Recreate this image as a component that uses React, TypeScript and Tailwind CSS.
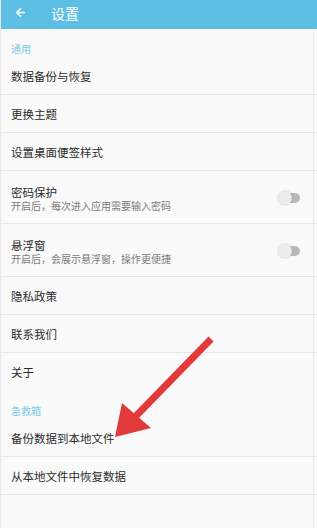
import React from "react";

const font = { fontFamily: '"Noto Sans CJK SC", "Noto Sans", sans-serif' };

function Toggle() {
  return (
    <div className="relative w-[22px] h-[16px] mr-[17px]">
      <div className="absolute right-0 top-[3px] w-[18px] h-[10px] rounded-full bg-[#b9b9b9]" />
      <div className="absolute left-0 top-[1px] w-[14px] h-[14px] rounded-full bg-[#ececec] shadow-[0_0_2px_rgba(0,0,0,0.25)]" />
    </div>
  );
}

function Item({ title }: { title: string }) {
  return (
    <div className="h-[38px] flex items-center pl-[10px] border-b border-[#e6e6e6] text-[11.5px] text-[#2b2b2b] leading-[14px]">
      {title}
    </div>
  );
}

function ToggleItem({ title, sub }: { title: string; sub: string }) {
  return (
    <div className="h-[53px] flex items-start justify-between pl-[10px] pt-[14px] border-b border-[#e6e6e6]">
      <div className="flex flex-col">
        <div className="text-[11.5px] leading-[14px] text-[#2b2b2b]">{title}</div>
        <div className="mt-[1px] text-[10px] leading-[12px] text-[#7a7a7a]">{sub}</div>
      </div>
      <div className="mt-[5px]">
        <Toggle />
      </div>
    </div>
  );
}

function Label({ text }: { text: string }) {
  return (
    <div className="h-[28px] pl-[10px] pt-[14px] text-[10px] leading-[12px] text-[#7cc8ea]">{text}</div>
  );
}

export default function App() {
  return (
    <div className="relative w-[317px] h-[528px] bg-[#fafafa] overflow-hidden border-l border-[#e8e8e8]" style={font}>
      <div className="h-[29px] bg-[#5ebfe5] flex items-center pb-[4px] pl-[13px] text-white">
        <svg width="13" height="13" viewBox="0 0 24 24" fill="none" stroke="white" strokeWidth="2.6" strokeLinecap="round" strokeLinejoin="round">
          <path d="M19 12H5" />
          <path d="M12 19l-7-7 7-7" />
        </svg>
        <span className="ml-[24px] text-[14px] leading-[16px]">设置</span>
      </div>
      <Label text="通用" />
      <Item title="数据备份与恢复" />
      <Item title="更换主题" />
      <Item title="设置桌面便签样式" />
      <ToggleItem title="密码保护" sub="开启后，每次进入应用需要输入密码" />
      <ToggleItem title="悬浮窗" sub="开启后，会展示悬浮窗，操作更便捷" />
      <Item title="隐私政策" />
      <Item title="联系我们" />
      <div className="h-[38px] flex items-center pl-[10px] text-[11.5px] text-[#2b2b2b] leading-[14px]">关于</div>
      <Label text="急救箱" />
      <Item title="备份数据到本地文件" />
      <Item title="从本地文件中恢复数据" />
      <div className="absolute top-[29px] bottom-0 left-[312px] w-px bg-[#ececec]" />
      <svg className="absolute left-0 top-0 pointer-events-none" width="317" height="528">
        <line x1="210" y1="339" x2="134" y2="417" stroke="#e23a3a" strokeWidth="7" />
        <polygon points="114,437 121,403 150,428" fill="#e23a3a" />
      </svg>
    </div>
  );
}
